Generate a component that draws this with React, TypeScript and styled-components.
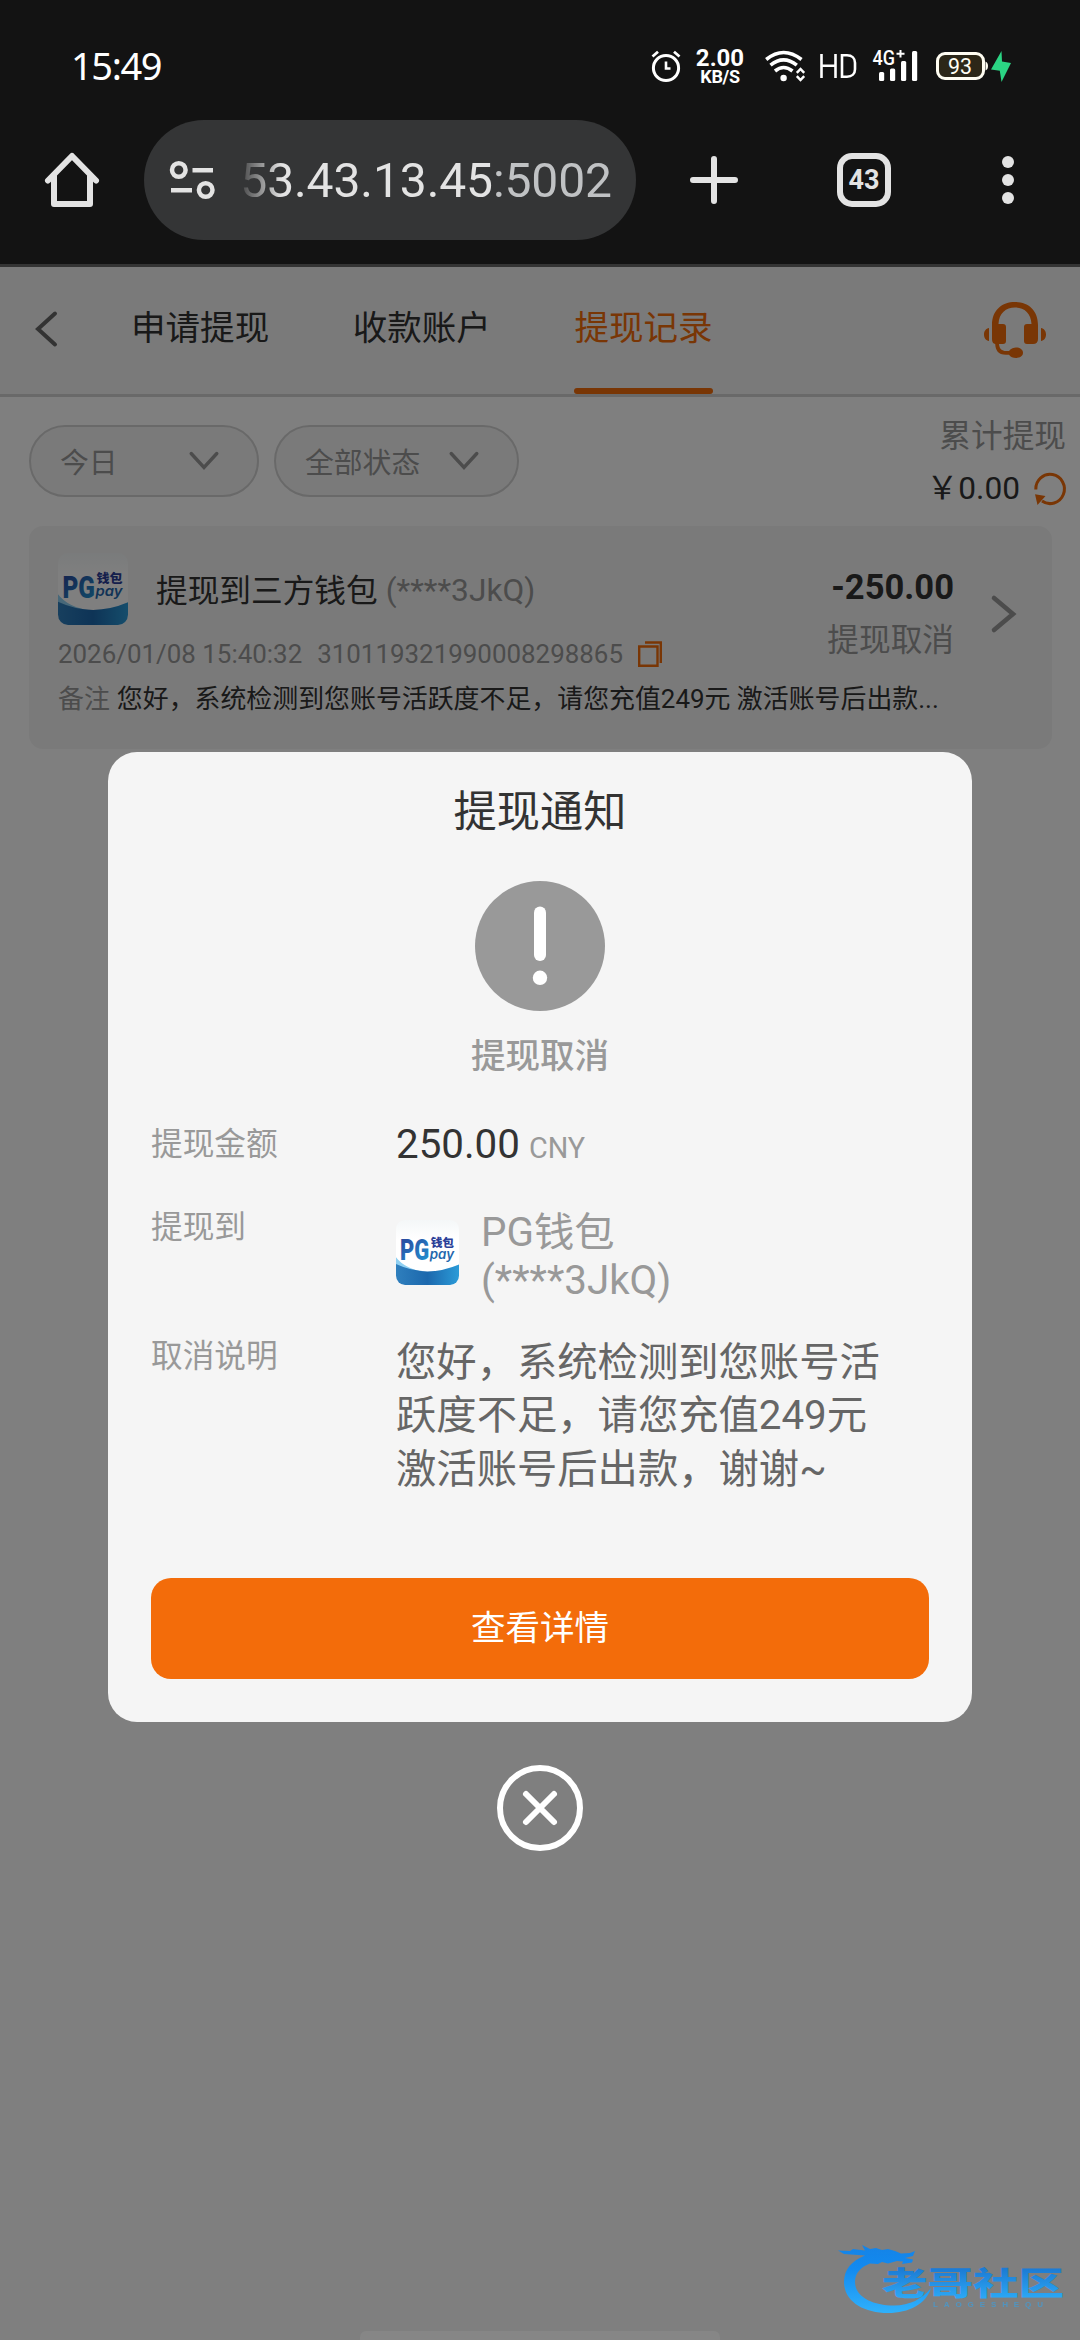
import React from "react";
import styled, { createGlobalStyle } from "styled-components";

const ORANGE = "#f36c0a";

const GlobalStyle = createGlobalStyle`
  *, *::before, *::after { box-sizing: border-box; }
  html, body { margin: 0; padding: 0; background: #808080; }
  body { font-family: Roboto, "Noto Sans CJK SC", sans-serif; color: #333; }
  svg { display: block; flex: none; overflow: visible; }
`;

const Screen = styled.div`
  position: relative;
  display: flex;
  flex-direction: column;
  width: 1080px;
  height: 2340px;
  overflow: hidden;
  background: #fff;
`;

/* ---------- system and browser bars ---------- */

const Chrome = styled.header`
  height: 267px;
  background: #131313;
  border-bottom: 3px solid #343434;
`;

const StatusBar = styled.div`
  display: flex;
  align-items: center;
  height: 120px;
  padding: 12px 68px 0 71px;
  color: #fff;
`;

const Clock = styled.span`
  margin: -3px auto 0 0;
  font: 400 38px/40px "Noto Sans", sans-serif;
  letter-spacing: -1.4px;
`;

const Icons = styled.div`
  display: flex;
  align-items: center;
`;

const NetSpeed = styled.div`
  display: flex;
  flex-direction: column;
  align-items: center;
  width: 50px;
  margin: 2px 20px 0 14px;
  font-weight: 700;
  font-size: 24px;
  line-height: 19px;

  small {
    font-size: 18px;
    line-height: 17px;
    letter-spacing: -0.3px;
  }
`;

const Cellular = styled.div`
  display: flex;
  gap: 16px;
  margin: 0 17px 0 14px;
  align-items: center;
`;

const Toolbar = styled.div`
  display: flex;
  align-items: center;
  height: 120px;
  padding-left: 45px;
`;

const AddressBar = styled.div`
  display: flex;
  align-items: center;
  width: 492px;
  height: 120px;
  margin: 0 54px 0 45px;
  padding: 0 24px 0 26px;
  border-radius: 60px;
  background: #343536;
`;

const Address = styled.div`
  display: flex;
  justify-content: flex-end;
  flex: 1;
  margin-left: 26px;
  padding-top: 2px;
  overflow: hidden;
  font-size: 48px;
  line-height: 60px;
  letter-spacing: -0.1px;
  color: #e3e3e3;
  mask-image: linear-gradient(to right, transparent -6px, #000 40px);

  span { color: #c0c2c4; }
`;

const TabCount = styled.div`
  display: flex;
  align-items: center;
  justify-content: center;
  width: 54px;
  height: 54px;
  margin: 0 111px 0 99px;
  border: 6px solid #e3e3e3;
  border-radius: 15px;
  color: #e3e3e3;
  font-size: 27px;
  font-weight: 700;
`;

/* ---------- withdrawal page ---------- */

const Nav = styled.nav`
  display: flex;
  align-items: stretch;
  height: 130px;
  padding: 0 34px 1px 34px;
  background: #f5f5f5;
  border-bottom: 3px solid #d3d3d3;

  > svg { align-self: center; }
`;

const Tabs = styled.div`
  display: flex;
  gap: 83.5px;
  flex: 1;
  margin: 0 0 -1px 73px;
`;

const Tab = styled.div<{ $active?: boolean }>`
  display: flex;
  align-items: center;
  position: relative;
  padding-bottom: 11px;
  font-size: 34.56px;
  color: ${(p) => (p.$active ? ORANGE : "#333")};

  &::after {
    content: "";
    display: ${(p) => (p.$active ? "block" : "none")};
    position: absolute;
    left: 0;
    right: 0;
    bottom: 0;
    height: 6px;
    border-radius: 3px;
    background: ${ORANGE};
  }
`;

const Filters = styled.div`
  display: flex;
  align-items: flex-start;
  height: 129px;
  padding: 28px 14px 0 29px;
`;

const Select = styled.div<{ $width: number }>`
  display: flex;
  align-items: center;
  justify-content: space-between;
  width: ${(p) => p.$width}px;
  height: 72px;
  margin-right: 15px;
  padding: 0 38px 2px 29px;
  border: 2.5px solid #d3d3d3;
  border-radius: 36px;
  background: #f5f5f5;
  font-size: 28.8px;
  color: #999;
`;

const Total = styled.div`
  margin: -6px 0 0 auto;
  text-align: right;
  font-size: 31.68px;
  line-height: 36px;
  color: #999;
`;

const TotalValue = styled.div`
  display: flex;
  align-items: center;
  justify-content: flex-end;
  gap: 14px;
  margin-top: 16px;
  color: #333;
`;

const Record = styled.section`
  display: flex;
  height: 223px;
  margin: 0 28px 0 29px;
  padding: 27px 35px 0 29px;
  border-radius: 14px;
  background: #f5f5f5;
`;

const RecordMain = styled.div`
  width: 777px;
`;

const RecordTitle = styled.div`
  display: flex;
  align-items: center;
  height: 72px;
  font-size: 31.68px;
  line-height: 40px;
  white-space: nowrap;

  > svg { margin-right: 28px; }
  span { margin-top: 5px; }
  em { margin: 4px 0 0 8px; font-style: normal; color: #999; }
`;

const RecordMeta = styled.div`
  display: flex;
  align-items: center;
  gap: 15px;
  height: 44px;
  margin-top: 7px;
  font-size: 25.92px;
  color: #999;
`;

const RecordNote = styled.div`
  width: 885px;
  height: 40px;
  margin-top: 3px;
  font-size: 25.92px;
  line-height: 40px;
  white-space: nowrap;

  span { margin-right: 7px; color: #999; }
`;

const RecordSide = styled.div`
  flex: 1;
  margin: 15px -3px 0 -60px;
  text-align: right;
  font-size: 31.68px;
  line-height: 50px;
  color: #999;
  white-space: nowrap;

  b {
    display: block;
    height: 48px;
    font-size: 34.56px;
    line-height: 38px;
    color: #333;
  }
`;

const RecordArrow = styled.div`
  margin: 42px 0 0 40px;
`;

/* ---------- dialog ---------- */

const Mask = styled.div`
  position: absolute;
  inset: 267px 0 0 0;
  display: flex;
  flex-direction: column;
  align-items: center;
  padding-top: 485px;
  background: rgba(0, 0, 0, 0.5);
`;

const Dialog = styled.section`
  display: flex;
  flex-direction: column;
  align-items: center;
  width: 864px;
  height: 970px;
  margin-bottom: 43px;
  padding: 31px 43px 43px;
  border-radius: 29px;
  background: #f5f5f5;
`;

const DialogTitle = styled.h1`
  margin: 0 0 38px;
  font-size: 43.2px;
  font-weight: 400;
  line-height: 60px;
`;

const DialogStatus = styled.p`
  margin: 19px 0 0;
  font-size: 34.56px;
  font-weight: 500;
  line-height: 52px;
  color: #999;
`;

const Details = styled.dl`
  display: grid;
  grid-template-columns: 245px 1fr;
  grid-template-rows: 83px 129px 1fr;
  flex: 1;
  width: 100%;
  margin: 36px 0 0;

  dt {
    font-size: 31.68px;
    line-height: 54px;
    color: #999;
  }
  dd { margin: 0; }
`;

const Amount = styled.dd`
  font-size: 40.32px;
  line-height: 54px;

  small {
    margin-left: 9px;
    font-size: 28.8px;
    color: #999;
  }
`;

const Account = styled.dd`
  display: flex;
  gap: 22px;
  padding-top: 12px;
  font-size: 40.32px;
  line-height: 48px;
  color: #999;

  > svg { margin-top: 7px; }
  p { margin: -4px 0 0; width: 190px; }
`;

const Reason = styled.dd`
  width: 500px;
  padding-top: 6px;
  font-size: 40.32px;
  line-height: 53.3px;
  color: #666;
  white-space: pre-line;
`;

const PrimaryButton = styled.button`
  width: 100%;
  height: 101px;
  border: 0;
  border-radius: 20px;
  background: ${ORANGE};
  color: #fff;
  font: inherit;
  font-size: 34.56px;
  padding: 0 0 7px;
`;

const Watermark = styled.div`
  position: absolute;
  left: 840px;
  top: 2240px;
`;

const Handle = styled.div`
  position: absolute;
  left: 360px;
  bottom: 0;
  width: 360px;
  height: 9px;
  border-radius: 6px 6px 0 0;
  background: #868686;
`;

/* ---------- drawings ---------- */

const AlarmIcon = () => (
  <svg width="30" height="32" viewBox="0 0 30 32" fill="none" stroke="#fff" strokeWidth="3">
    <circle cx="15" cy="18" r="12.6" />
    <path d="M1.5 6.5 7 1.8M28.5 6.5 23 1.8" strokeWidth="2.8" />
    <path d="M15 11.5v7h4.5" strokeWidth="2.6" />
  </svg>
);

const WifiIcon = () => (
  <svg width="41" height="32" viewBox="0 0 41 32" fill="none" stroke="#fff" strokeWidth="3.6">
    <path d="M1.2 9.5Q18.5-4.5 36.5 9.5" />
    <path d="M5.5 15.2Q18.5 4.5 31.8 15.2" />
    <path d="M10 21Q18.5 14 27.5 21" />
    <circle cx="18.6" cy="28" r="3.2" fill="#fff" stroke="none" />
    <path d="M31.8 22.8 35.5 19l3.7 3.8M31.8 26.2l3.7 3.8 3.7-3.8" strokeWidth="2.5" />
  </svg>
);

const HdIcon = () => (
  <svg width="37" height="26" viewBox="0 0 37 26" fill="none" stroke="#fff" strokeWidth="2.6">
    <path d="M1.5 1v24M15.5 1v24M1.5 12.8h14M22 2.3v21.4h5c5 0 8-3 8-7.5v-6.4c0-4.5-3-7.5-8-7.5z" />
  </svg>
);

const SignalIcon = () => (
  <svg width="46" height="32" viewBox="0 0 46 32" fill="#fff">
    <text x="-.5" y="15.3" fontSize="19.5" fontFamily="Roboto" fontWeight="500" textLength="22.500" lengthAdjust="spacingAndGlyphs">4G</text>
    <path d="M23.5 3.8h8M27.5 0v7.600" stroke="#fff" strokeWidth="2" />
    <rect x="6" y="22" width="5.2" height="9" rx="1.5" />
    <rect x="17" y="18.500" width="5.2" height="12.500" rx="1.5" />
    <rect x="28" y="11" width="5.2" height="20" rx="1.5" />
    <rect x="39" y="1" width="5.2" height="30" rx="1.5" />
  </svg>
);

const BatteryIcon = () => (
  <svg width="76" height="32" viewBox="0 0 76 32">
    <rect x="1.5" y="3.5" width="46" height="25" rx="7.5" fill="#2c2718" stroke="#fffdf2" strokeWidth="3" />
    <path d="M49.5 11.5q2.5 1 2.5 4.5t-2.5 4.5z" fill="#fffdf2" />
    <text x="12" y="23.8" fontSize="22" fontFamily="Roboto" fill="#fffdf2" textLength="24" lengthAdjust="spacingAndGlyphs">93</text>
    <path d="M65.5 1 55 19.5l8.8 1.2L65.5 32 75 13l-9-1.5z" fill="#2bd584" />
  </svg>
);

const HomeIcon = () => (
  <svg width="54" height="54" viewBox="0 0 54 54" fill="none" stroke="#e3e3e3" strokeWidth="6" strokeLinecap="round" strokeLinejoin="round">
    <path d="M3 27.5 27 3l24 24.5" />
    <path d="M9 23v28h36V23" />
  </svg>
);

const TuneIcon = () => (
  <svg width="46" height="40" viewBox="0 0 46 40" fill="none" stroke="#e3e3e3" strokeWidth="4.5">
    <circle cx="8.8" cy="10" r="6.8" />
    <path d="M22.5 10.2H43M1 30.2h21" />
    <circle cx="35.7" cy="30" r="6.8" />
  </svg>
);

const PlusIcon = () => (
  <svg width="48" height="48" viewBox="0 0 48 48" stroke="#e3e3e3" strokeWidth="6" strokeLinecap="round">
    <path d="M24 3v42M3 24h42" />
  </svg>
);

const MoreIcon = () => (
  <svg width="12" height="48" viewBox="0 0 12 48" fill="#e3e3e3">
    <circle cx="6" cy="6" r="6" />
    <circle cx="6" cy="24" r="6" />
    <circle cx="6" cy="42" r="6" />
  </svg>
);

const BackIcon = () => (
  <svg width="24" height="36" viewBox="0 0 24 36" fill="none" stroke="#666" strokeWidth="4" strokeLinecap="round">
    <path d="M21 1.5 4 17l17 15.5" />
  </svg>
);

const HeadsetIcon = () => (
  <svg width="62" height="56" viewBox="0 0 62 56" fill={ORANGE}>
    <path d="M8 23C8 8 18 0 31 0s23 8 23 23v14q0 5-5 5h-6q-3 0-3-3V25q0-3 3-3h4.5C47 11 40 5.5 31 5.5S15 11 14.5 22H19q3 0 3 3v14q0 3-3 3h-4c.5 5 3 7 7 7h3c2-3 5-3.5 7-3.5 4 0 7 2 7 5.300S36 56 32 56c-3 0-5.500-1-7-3.200h-3C14 52.800 11.500 48 11.200 42 9 41.500 8 40 8 37z" />
    <path d="M5 26v13C2 38.500 0 36 0 32.500S2 26.500 5 26zM57 26v13c3-.5 5-3 5-6.500S60 26.500 57 26z" />
  </svg>
);

const DownIcon = () => (
  <svg width="30" height="20" viewBox="0 0 30 20" fill="none" stroke="#999" strokeWidth="3.4" strokeLinecap="round">
    <path d="M2.2 3.500 15 17.500l12.800-14" />
  </svg>
);

const RefreshIcon = () => (
  <svg width="32" height="34" viewBox="0 0 32 34" fill="none" stroke={ORANGE} strokeWidth="3">
    <path d="M1.8 17.5A14.300 14.600 0 1 1 8 29" />
    <path d="M1 22.200 11.500 24 3.500 33z" fill={ORANGE} stroke="none" />
  </svg>
);

const CopyIcon = () => (
  <svg width="24" height="26" viewBox="0 0 24 26" fill="none" stroke={ORANGE} strokeWidth="2.4">
    <path d="M1.2 5.5h18.300v19.300H1.200z" />
    <path d="M7 1.500h15.800v20.500" />
  </svg>
);

const RightIcon = () => (
  <svg width="26" height="38" viewBox="0 0 26 38" fill="none" stroke="#999" strokeWidth="4.6" strokeLinecap="round">
    <path d="M3 3 22 19 3 35" />
  </svg>
);

const PgPayLogo = ({ id, width, height }: { id: string; width: number; height: number }) => (
  <svg width={width} height={height} viewBox="0 0 70 70" preserveAspectRatio="none">
    <defs>
      <linearGradient id={`${id}-bg`} x1="0" y1="0" x2="0" y2="1">
        <stop offset="0" stopColor="#f4f7f8" />
        <stop offset=".3" stopColor="#fff" />
      </linearGradient>
      <linearGradient id={`${id}-wave`} x1="0" y1="0" x2="1" y2="0">
        <stop offset="0" stopColor="#2f7fbd" />
        <stop offset=".5" stopColor="#1c68ad" />
        <stop offset="1" stopColor="#2b9bd8" />
      </linearGradient>
      <linearGradient id={`${id}-pg`} x1="0" y1="0" x2=".6" y2="1">
        <stop offset="0" stopColor="#2b3f98" />
        <stop offset="1" stopColor="#2390cf" />
      </linearGradient>
      <clipPath id={`${id}-clip`}><rect width="70" height="70" rx="10" /></clipPath>
    </defs>
    <g clipPath={`url(#${id}-clip)`}>
      <rect width="70" height="70" fill={`url(#${id}-bg)`} />
      <path d="M0 40Q10 53 34 56 12 60 0 52z" fill="#8fd0f2" />
      <path d="M0 47.5Q34 63 70 48V70H0z" fill={`url(#${id}-wave)`} />
      <text x="4.5" y="43.5" fontFamily="Roboto" fontWeight="900" fontSize="31" fill={`url(#${id}-pg)`} textLength="32.5" lengthAdjust="spacingAndGlyphs">PG</text>
      <text x="38.5" y="29.5" fontFamily="Noto Sans CJK SC" fontWeight="900" fontSize="12" fill="#2b3f98" textLength="26" lengthAdjust="spacingAndGlyphs">钱包</text>
      <text x="37.5" y="42" fontFamily="Inter" fontStyle="italic" fontWeight="600" fontSize="14" fill="#2467ad" textLength="27" lengthAdjust="spacingAndGlyphs">pay</text>
    </g>
  </svg>
);

const NoticeIcon = () => (
  <svg width="130" height="130" viewBox="0 0 130 130">
    <circle cx="65" cy="65" r="65" fill="#999" />
    <rect x="59" y="25.5" width="12" height="54.5" rx="6" fill="#fff" />
    <circle cx="65" cy="96.8" r="7.2" fill="#fff" />
  </svg>
);

const CloseIcon = () => (
  <svg width="86" height="86" viewBox="0 0 86 86" fill="none" stroke="#fff" strokeWidth="6" strokeLinecap="round">
    <circle cx="43" cy="43" r="40" />
    <path d="M29 29l28 28M57 29 29 57" />
  </svg>
);

const DragonMark = () => (
  <svg width="228" height="80" viewBox="0 0 228 80">
    <defs>
      <linearGradient id="mark" gradientUnits="userSpaceOnUse" x1="0" y1="5" x2="0" y2="72">
        <stop offset="0" stopColor="#1583e6" />
        <stop offset=".35" stopColor="#128af0" />
        <stop offset="1" stopColor="#2fb0fb" />
      </linearGradient>
      <linearGradient id="markText" gradientUnits="userSpaceOnUse" x1="0" y1="27" x2="0" y2="57">
        <stop offset="0" stopColor="#1b78d2" />
        <stop offset="1" stopColor="#2ba6f4" />
      </linearGradient>
    </defs>
    <path
      fill="url(#mark)"
      d="M25 15.500C11 21 4 30 4 42c0 19 19 31 44 31 21 0 38-9 43-25C82 59 70 65.500 54 65.500 31 65.500 15 56 15 42c0-9 6-15 15-18.500l8 .5 4-2 6 1.500 9-2.500 6 .5-1 2.500 10-1.500 1-3-8-1.500 8-2 2-5-5 2-9 .5-6-2.500-7-2-6 1-6-2-6 1-8-4 3 5.500-12-1.500-3 2-12-.5 6 3.500z"
    />
    <g fill="url(#markText)">
      <text x="42" y="55" fontFamily="Noto Sans CJK SC" fontWeight="900" fontSize="32" textLength="182" lengthAdjust="spacingAndGlyphs">老哥社区</text>
      <text x="93" y="66.500" fontFamily="Liberation Sans" fontWeight="700" fontSize="8" opacity=".55" textLength="110">LAOGESHEQU</text>
    </g>
  </svg>
);

export default function App() {
  return (
    <Screen>
      <GlobalStyle />
      <Chrome>
        <StatusBar>
          <Clock>15:49</Clock>
          <Icons>
            <AlarmIcon />
            <NetSpeed>2.00<small>KB/S</small></NetSpeed>
            <WifiIcon />
            <Cellular>
              <HdIcon />
              <SignalIcon />
            </Cellular>
            <BatteryIcon />
          </Icons>
        </StatusBar>
        <Toolbar>
          <HomeIcon />
          <AddressBar>
            <TuneIcon />
            <Address>53.43.13.45<span>:5002</span></Address>
          </AddressBar>
          <PlusIcon />
          <TabCount>43</TabCount>
          <MoreIcon />
        </Toolbar>
      </Chrome>

      <Nav>
        <BackIcon />
        <Tabs>
          <Tab>申请提现</Tab>
          <Tab>收款账户</Tab>
          <Tab $active>提现记录</Tab>
        </Tabs>
        <HeadsetIcon />
      </Nav>

      <Filters>
        <Select $width={230}>今日<DownIcon /></Select>
        <Select $width={245}>全部状态<DownIcon /></Select>
        <Total>
          累计提现
          <TotalValue>￥0.00<RefreshIcon /></TotalValue>
        </Total>
      </Filters>

      <Record>
        <RecordMain>
          <RecordTitle>
            <PgPayLogo id="record" width={70} height={72} />
            <span>提现到三方钱包</span>
            <em>(****3JkQ)</em>
          </RecordTitle>
          <RecordMeta>
            <span>2026/01/08 15:40:32</span>
            <span>310119321990008298865</span>
            <CopyIcon />
          </RecordMeta>
          <RecordNote><span>备注</span>您好，系统检测到您账号活跃度不足，请您充值249元 激活账号后出款...</RecordNote>
        </RecordMain>
        <RecordSide><b>-250.00</b>提现取消</RecordSide>
        <RecordArrow><RightIcon /></RecordArrow>
      </Record>

      <Mask>
        <Dialog>
          <DialogTitle>提现通知</DialogTitle>
          <NoticeIcon />
          <DialogStatus>提现取消</DialogStatus>
          <Details>
            <dt>提现金额</dt>
            <Amount>250.00<small>CNY</small></Amount>
            <dt>提现到</dt>
            <Account>
              <PgPayLogo id="dialog" width={63} height={65} />
              <p>PG钱包 (****3JkQ)</p>
            </Account>
            <dt>取消说明</dt>
            <Reason>{"您好，系统检测到您账号活\n跃度不足，请您充值249元\n激活账号后出款，谢谢~"}</Reason>
          </Details>
          <PrimaryButton>查看详情</PrimaryButton>
        </Dialog>
        <CloseIcon />
      </Mask>

      <Watermark><DragonMark /></Watermark>
      <Handle />
    </Screen>
  );
}
